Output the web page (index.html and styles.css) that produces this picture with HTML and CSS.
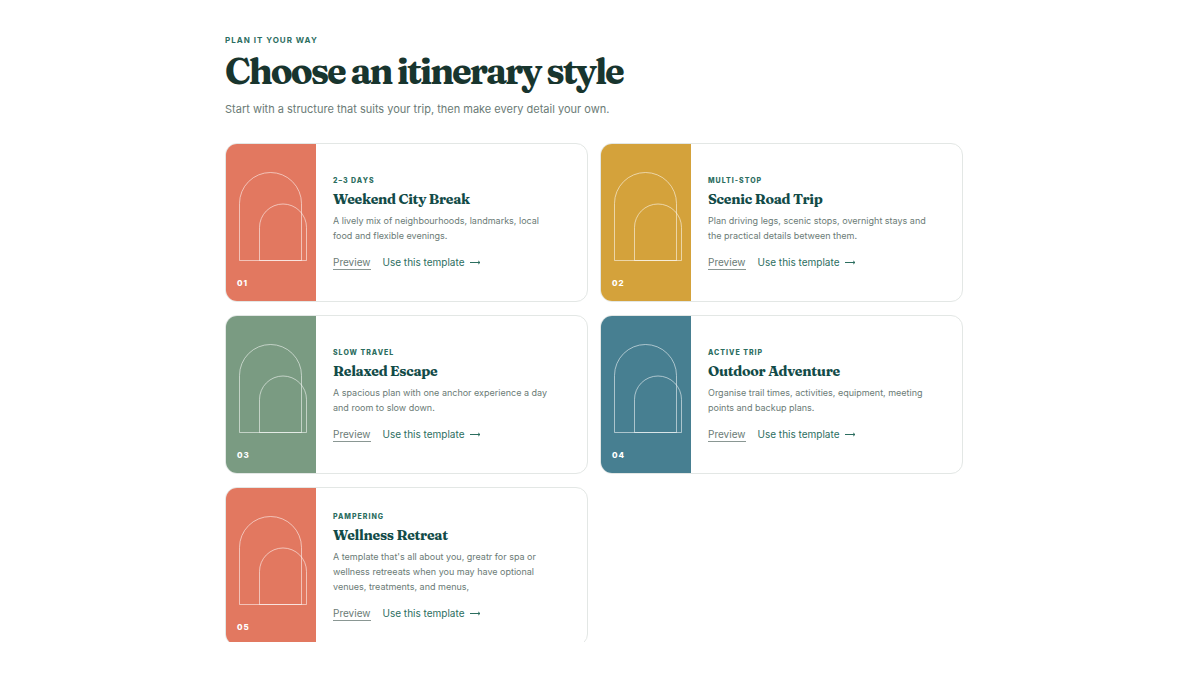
FILE: index.html
```html
<!DOCTYPE html>
<html lang="en">
<head>
<meta charset="UTF-8">
<meta name="viewport" content="width=device-width, initial-scale=1.0">
<title>Choose an itinerary style</title>
<link rel="stylesheet" href="styles.css">
</head>
<body>

<svg class="symbols" aria-hidden="true">
    <symbol id="arches" viewBox="0 0 68 89">
        <path d="M.5 88.500V31.500a31 31 0 0 1 62 0v57z"/>
        <path d="M20.500 88.500V55.500a23.500 23.500 0 0 1 47 0v33z"/>
    </symbol>
    <symbol id="arrow" viewBox="0 0 11 7">
        <path d="M0 3.500h10"/>
        <path d="M8.200 2L10 3.500 8.200 5"/>
    </symbol>
</svg>

<main class="templates">
    <header class="intro">
        <p class="eyebrow">Plan it your way</p>
        <h1>Choose an itinerary style</h1>
        <p class="lead">Start with a structure that suits your trip, then make every detail your own.</p>
    </header>

    <div class="card-grid">
        <article class="card">
            <div class="cover coral">
                <svg class="arches" aria-hidden="true"><use href="#arches"/></svg>
                <span class="number">01</span>
            </div>
            <div class="card-body">
                <p class="eyebrow">2–3 days</p>
                <h2>Weekend City Break</h2>
                <p class="description">A lively mix of neighbourhoods, landmarks, local food and flexible evenings.</p>
                <div class="actions">
                    <a href="#" class="preview">Preview</a>
                    <a href="#" class="use">Use this template <svg class="arrow" aria-hidden="true"><use href="#arrow"/></svg></a>
                </div>
            </div>
        </article>

        <article class="card">
            <div class="cover gold">
                <svg class="arches" aria-hidden="true"><use href="#arches"/></svg>
                <span class="number">02</span>
            </div>
            <div class="card-body">
                <p class="eyebrow">Multi-stop</p>
                <h2>Scenic Road Trip</h2>
                <p class="description">Plan driving legs, scenic stops, overnight stays and the practical details between them.</p>
                <div class="actions">
                    <a href="#" class="preview">Preview</a>
                    <a href="#" class="use">Use this template <svg class="arrow" aria-hidden="true"><use href="#arrow"/></svg></a>
                </div>
            </div>
        </article>

        <article class="card">
            <div class="cover sage">
                <svg class="arches" aria-hidden="true"><use href="#arches"/></svg>
                <span class="number">03</span>
            </div>
            <div class="card-body">
                <p class="eyebrow">Slow travel</p>
                <h2>Relaxed Escape</h2>
                <p class="description">A spacious plan with one anchor experience a day and room to slow down.</p>
                <div class="actions">
                    <a href="#" class="preview">Preview</a>
                    <a href="#" class="use">Use this template <svg class="arrow" aria-hidden="true"><use href="#arrow"/></svg></a>
                </div>
            </div>
        </article>

        <article class="card">
            <div class="cover blue">
                <svg class="arches" aria-hidden="true"><use href="#arches"/></svg>
                <span class="number">04</span>
            </div>
            <div class="card-body">
                <p class="eyebrow">Active trip</p>
                <h2>Outdoor Adventure</h2>
                <p class="description">Organise trail times, activities, equipment, meeting points and backup plans.</p>
                <div class="actions">
                    <a href="#" class="preview">Preview</a>
                    <a href="#" class="use">Use this template <svg class="arrow" aria-hidden="true"><use href="#arrow"/></svg></a>
                </div>
            </div>
        </article>

        <article class="card">
            <div class="cover coral">
                <svg class="arches" aria-hidden="true"><use href="#arches"/></svg>
                <span class="number">05</span>
            </div>
            <div class="card-body">
                <p class="eyebrow">Pampering</p>
                <h2>Wellness Retreat</h2>
                <p class="description">A template that's all about you, greatr for spa or wellness retreeats when you may have optional venues, treatments, and menus,</p>
                <div class="actions">
                    <a href="#" class="preview">Preview</a>
                    <a href="#" class="use">Use this template <svg class="arrow" aria-hidden="true"><use href="#arrow"/></svg></a>
                </div>
            </div>
        </article>
    </div>
</main>

</body>
</html>
```
FILE: styles.css
```css
* {
    margin: 0;
    padding: 0;
    box-sizing: border-box;
}
body {
    background: #fff;
    color: #6b7b76;
    font-family: Inter, sans-serif;
}
.symbols {
    display: none;
}
/* The list is cut off above the bottom edge of the window */
.templates {
    height: calc(100vh - 33px);
    padding: 35px 237px 0 225px;
    overflow: hidden;
}
.intro {
    margin-bottom: 26px;
}
.eyebrow {
    font-size: 7px;
    line-height: 10px;
    font-weight: 800;
    letter-spacing: 1px;
    text-transform: uppercase;
    color: #2c6e5f;
}
.intro .eyebrow {
    font-size: 8px;
    font-weight: 700;
}
h1, h2 {
    font-family: Fraunces, "Liberation Serif", serif;
    font-weight: 700;
}
h1 {
    margin: 6px 0 10px;
    font-size: 36px;
    line-height: 40px;
    letter-spacing: -2px;
    color: #18352e;
}
.lead {
    font-size: 11px;
    line-height: 16px;
}
.card-grid {
    display: grid;
    grid-template-columns: 1fr 1fr;
    gap: 13px 12px;
}
.card {
    display: flex;
    min-height: 159px;
    border: 1px solid #e3e7e5;
    border-radius: 12px;
    overflow: hidden;
}
.cover {
    flex: 0 0 90px;
    display: flex;
    flex-direction: column;
    justify-content: space-between;
    padding: 28px 9px 13px 11px;
    color: #fff;
}
.coral { background: #e27860; }
.gold { background: #d4a23b; }
.sage { background: #7a9b82; }
.blue { background: #477f91; }
.arches {
    width: 68px;
    height: 89px;
    margin-left: 2px;
    fill: none;
    stroke: #fff;
    stroke-opacity: 0.55;
}
.number {
    font-size: 8px;
    line-height: 10px;
    font-weight: 800;
    letter-spacing: 1px;
}
.card-body {
    flex: 1;
    display: flex;
    flex-direction: column;
    justify-content: center;
    padding: 16px 30px 16px 17px;
}
h2 {
    margin: 3px 0 4px;
    font-size: 14px;
    line-height: 20px;
    letter-spacing: -0.02em;
    color: #124b48;
}
.description {
    font-size: 9px;
    line-height: 15px;
}
.actions {
    display: flex;
    align-items: center;
    gap: 12px;
    margin-top: 13px;
    font-size: 10px;
    line-height: 13px;
}
.actions a {
    text-decoration: none;
}
.preview {
    color: #6b7b76;
    border-bottom: 1px solid #8a9793;
}
.use {
    color: #2c6e5f;
    border-bottom: 1px solid transparent;
}
.arrow {
    width: 11px;
    height: 7px;
    margin-left: 3px;
    fill: none;
    stroke: currentColor;
}
@media (max-width: 900px) {
    .templates {
        height: auto;
        padding: 36px 24px;
    }
}
@media (max-width: 640px) {
    .card-grid {
        grid-template-columns: 1fr;
    }
}
```
